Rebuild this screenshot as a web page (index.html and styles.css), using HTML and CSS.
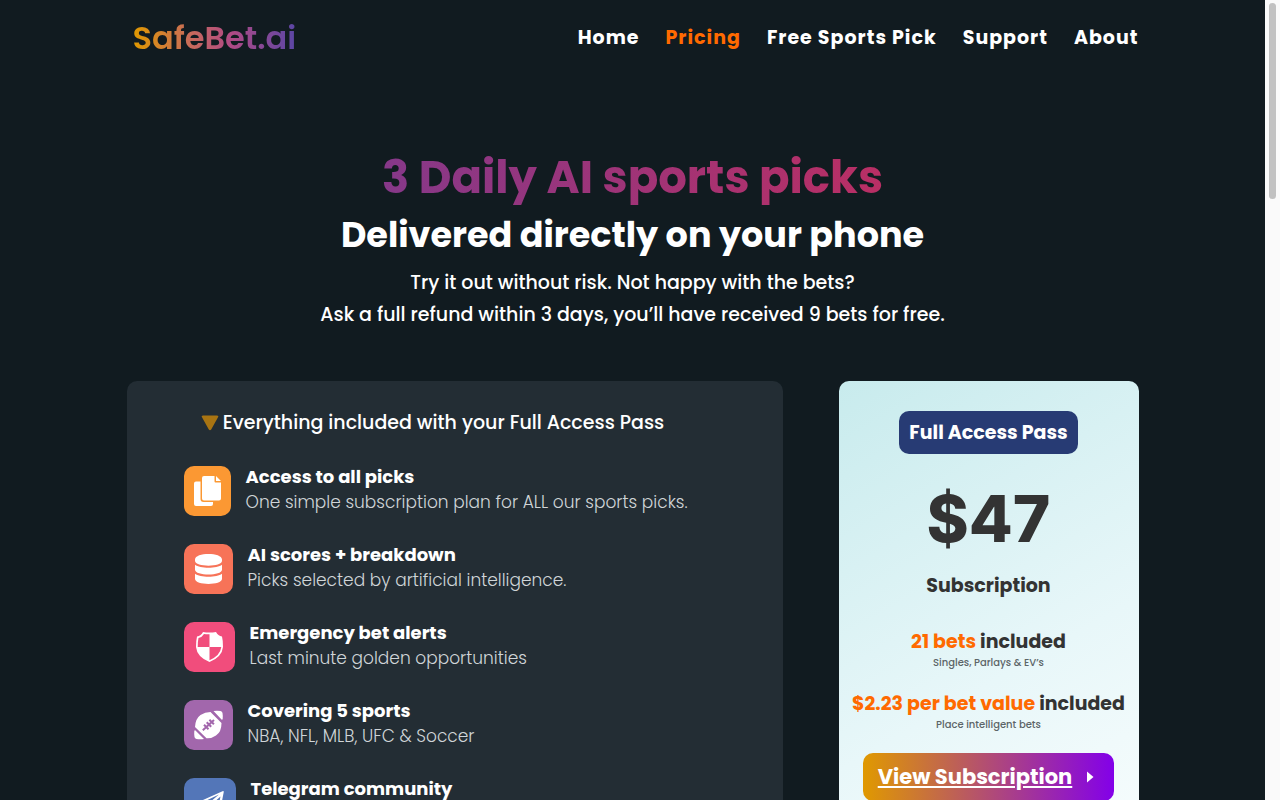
FILE: index.html
```html
<!DOCTYPE html>
<html lang="en">
<head>
<meta charset="utf-8">
<meta name="viewport" content="width=device-width, initial-scale=1">
<title>SafeBet.ai – Pricing</title>
<link rel="stylesheet" href="styles.css">
</head>
<body>
<div class="page">
  <header class="header container">
    <a class="logo" href="#">SafeBet.ai</a>
    <nav class="nav">
      <a href="#">Home</a>
      <a class="active" href="#">Pricing</a>
      <a href="#">Free Sports Pick</a>
      <a href="#">Support</a>
      <a href="#">About</a>
    </nav>
  </header>

  <main class="container">
    <section class="hero">
      <h1>3 Daily AI sports picks</h1>
      <h2>Delivered directly on your phone</h2>
      <p>Try it out without risk. Not happy with the bets?<br>Ask a full refund within 3 days, you’ll have received 9 bets for free.</p>
    </section>

    <div class="cards">
      <section class="included">
        <h3 class="included-title">
          <svg class="triangle" viewBox="0 0 18 16" aria-hidden="true"><path d="M2 .5h14q2 0 1 1.700L10.200 14.500q-1.200 1.500-2.400 0L1 2.200Q0 .5 2 .5z"/></svg>
          Everything included with your Full Access Pass
        </h3>
        <ul class="features">
          <li>
            <span class="icon copy"><svg viewBox="0 0 27 30" aria-hidden="true"><path d="M10 0h10.500v5.500q0 1 1 1H27v16q0 2-2 2H10q-2 0-2-2V2q0-2 2-2zM22 0l5 5h-5zM2 5.500h4.500V23q0 3 3 3H19v2q0 2-2 2H2q-2 0-2-2V7.500q0-2 2-2z"/></svg></span>
            <div class="text"><h4>Access to all picks</h4><p>One simple subscription plan for ALL our sports picks.</p></div>
          </li>
          <li>
            <span class="icon data"><svg viewBox="0 0 27 30" aria-hidden="true"><path d="M0 5.500C0-1.800 27-1.800 27 5.500v1.300c0 6.500-27 6.500-27 0zM0 10.800c5 4 22 4 27 0v5c0 6.300-27 6.300-27 0zM0 19.800c5 4 22 4 27 0v5c0 6.900-27 6.900-27 0z"/></svg></span>
            <div class="text"><h4>AI scores + breakdown</h4><p>Picks selected by artificial intelligence.</p></div>
          </li>
          <li>
            <span class="icon alert"><svg viewBox="0 0 27 30" aria-hidden="true"><path fill-rule="evenodd" d="M7 0Q13.500 1 20 0q2 3.800 6 4.500 1 4 1 10.500-1 10-13.500 15Q1 25 0 15 0 8.500 1 4.500 5 3.800 7 0zM13.500 2.200Q10.500 2.300 8 1.900 6 5.200 2.500 6 1.600 10 1.700 15H13.500zM13.500 15V28.200Q24.300 23.500 25.300 15z"/></svg></span>
            <div class="text"><h4>Emergency bet alerts</h4><p>Last minute golden opportunities</p></div>
          </li>
          <li>
            <span class="icon sport"><svg viewBox="0 0 29 30" aria-hidden="true"><path d="M1.500 20.500L10 29q-4 .6-7.500 0-1.700-.4-2-2Q0 24 .3 21q.4-1.200 1.200-.5zM19.500 1q3.500-.6 7 0 1.800.4 2 2 .5 3 .2 6-.4 1.200-1.200.5z"/><path d="M16.500 2L27.500 13Q27.500 22 22 25.500q-4.500 3.200-9.500 2.800L1 17Q1.500 8.500 6.500 5q4.500-3 10-3z"/><path class="cut" d="M8.800 20.200L20 10M10 14.800l4.500 4.500M12.700 12.300l4.500 4.500M15.400 9.800l4.500 4.500"/></svg></span>
            <div class="text"><h4>Covering 5 sports</h4><p>NBA, NFL, MLB, UFC &amp; Soccer</p></div>
          </li>
          <li>
            <span class="icon gram"><svg viewBox="0 0 30 30" aria-hidden="true"><path fill-rule="evenodd" d="M27.500 3.200q1.500-.5 1.200 1L24.500 26q-.4 2-2.200 1l-6.300-4.700-4 4.500q-1.500 1-1.600-1v-6L1.500 17q-2-.8-.2-2zM24 6.500L5 15.500l5.700 2.200zM25.500 8.500L13 19.500l9 5z"/></svg></span>
            <div class="text"><h4>Telegram community</h4></div>
          </li>
        </ul>
      </section>

      <section class="pass">
        <h3 class="badge">Full Access Pass</h3>
        <p class="price">$47</p>
        <p class="plan">Subscription</p>
        <p class="perk"><strong>21 bets</strong> included</p>
        <p class="note">Singles, Parlays &amp; EV’s</p>
        <p class="perk"><strong>$2.23 per bet value</strong> included</p>
        <p class="note">Place intelligent bets</p>
        <a class="cta" href="#"><span>View Subscription</span><svg viewBox="0 0 8 12" aria-hidden="true"><path d="M1 .5v11L7.500 6z"/></svg></a>
      </section>
    </div>
  </main>
</div>
<div class="scrollbar" aria-hidden="true"><div class="thumb"></div></div>
</body>
</html>
```
FILE: styles.css
```css
* { box-sizing: border-box; margin: 0; padding: 0; }

body {
  display: flex;
  height: 100vh;
  overflow: hidden;
  background: #111b20;
  color: #fff;
  font-family: Poppins, Inter, "Open Sans", sans-serif;
}

.page { flex: 1; min-width: 0; }
.container { width: 80%; margin: 0 auto; }

.header {
  display: flex;
  align-items: center;
  justify-content: space-between;
  height: 75px;
}
.logo {
  margin-left: 6px;
  font-size: 32px;
  font-weight: 600;
  line-height: 40px;
  text-decoration: none;
  color: transparent;
  background: linear-gradient(90deg, #e09900, #c86b5a 35%, #b04a85 60%, #5b46a5);
  -webkit-background-clip: text;
  background-clip: text;
}
.nav { display: flex; gap: 26px; }
.nav a {
  color: #fff;
  font-size: 19px;
  font-weight: 700;
  line-height: 24px;
  letter-spacing: 1px;
  text-decoration: none;
}
.nav .active { color: #ff6a00; }

.hero { padding: 73px 0 50px; text-align: center; }
.hero h1 {
  font-size: 45px;
  line-height: 60px;
  color: transparent;
  background: linear-gradient(90deg, #6c3d9c, #c92c59 90%);
  -webkit-background-clip: text;
  background-clip: text;
}
.hero h2 { font-size: 35px; line-height: 54px; }
.hero p { margin-top: 5px; font-size: 19px; font-weight: 500; line-height: 32px; }

.cards { display: grid; grid-template-columns: minmax(0, 1fr) 300px; gap: 56px; }

.included { padding: 26px 57px 30px; border-radius: 10px; background: #232d34; }
.included-title {
  display: flex;
  align-items: center;
  justify-content: center;
  gap: 4px;
  padding-right: 44px;
  font-size: 19px;
  font-weight: 500;
  line-height: 32px;
}
.triangle { width: 18px; height: 16px; fill: #a87412; }

.features { display: grid; gap: 25px; margin-top: 24px; list-style: none; }
.features li { display: flex; align-items: flex-end; gap: 15px; min-height: 53px; }
.text { align-self: stretch; }
.features h4 { padding-top: 1px; font-size: 18px; font-weight: 700; line-height: 26px; }
.features p { color: #d0d5d8; font-size: 17px; font-weight: 300; line-height: 25px; }

.icon {
  display: flex;
  align-items: center;
  justify-content: center;
  height: 50px;
  border-radius: 10px;
}
.icon svg { height: 30px; fill: #fff; }
.copy { width: 47px; background: #fb9833; }
.data { width: 49px; background: #f77358; }
.alert { width: 51px; background: #f14d7c; }
.sport { width: 49px; background: #a267ac; }
.gram { width: 52px; background: #5376b8; }
.cut { fill: none; stroke: #a267ac; stroke-width: 2; }

.pass {
  display: flex;
  flex-direction: column;
  align-items: center;
  padding: 30px 10px;
  border-radius: 10px;
  background: linear-gradient(150deg, #c8ebed, #e8f7f9 60%, #f8fdfd);
  color: #333;
  white-space: nowrap;
}
.badge {
  padding: 5px 10px;
  border-radius: 10px;
  background: #273b74;
  color: #fff;
  font-size: 19px;
  line-height: 33px;
}
.price { margin-top: 29px; font-family: Inter, sans-serif; font-size: 64px; font-weight: 800; line-height: 72px; }
.plan { margin-top: 15px; font-size: 19px; font-weight: 700; line-height: 32px; }
.perk { margin-top: 24px; font-size: 19px; font-weight: 700; line-height: 32px; }
.perk strong { color: #ff6a00; font-weight: 700; }
.note { color: #5c6568; font-size: 10px; font-weight: 500; line-height: 10px; }
.note + .perk { margin-top: 20px; }
.cta {
  display: flex;
  align-items: center;
  gap: 14px;
  margin-top: 23px;
  padding: 8px 20px 8px 15px;
  border-radius: 10px;
  background: linear-gradient(90deg, #e09900, #8300e9);
  color: #fff;
  font-size: 21px;
  font-weight: 700;
  line-height: 32px;
  text-decoration: underline;
}
.cta svg { width: 8px; height: 12px; fill: #fff; }

.scrollbar { width: 15px; padding: 3px 4px 0; background: #fafafa; }
.thumb { height: 196px; border-radius: 4px; background: #c1c1c1; }
```
